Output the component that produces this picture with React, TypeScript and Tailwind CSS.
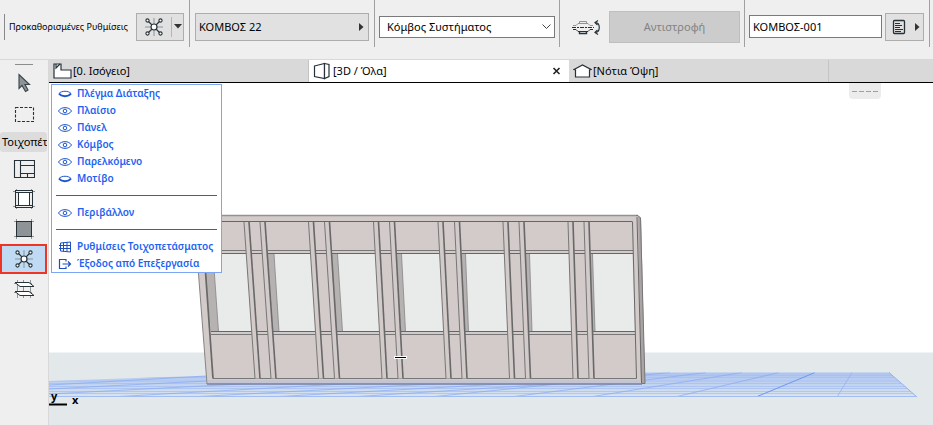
import { ReactNode, useState } from "react";
import clsx from "clsx";

type IconProps = { className?: string };

const NodeIcon = ({ className }: IconProps) => (
    <svg className={className} width="20" height="20" viewBox="0 0 20 20" fill="none" stroke="#263238">
        <path d="M10 1v18M1 10h18" stroke="#8d9396" />
        <path d="M4.500 4.500l11 11M15.500 4.500l-11 11" strokeWidth="1.200" />
        <circle cx="10" cy="10" r="3" fill="white" strokeWidth="1.200" />
        <circle cx="3.500" cy="3.500" r="1.600" fill="white" strokeWidth="1.100" />
        <circle cx="16.500" cy="3.500" r="1.600" fill="white" strokeWidth="1.100" />
        <circle cx="3.500" cy="16.500" r="1.600" fill="white" strokeWidth="1.100" />
        <circle cx="16.500" cy="16.500" r="1.600" fill="white" strokeWidth="1.100" />
    </svg>
)

const FlipIcon = () => (
    <svg width="29" height="16" viewBox="0 0 29 16" fill="none" stroke="#263238">
        <path d="M0 8.500h22" strokeDasharray="4 1 2 1" />
        <path d="M1 6.500h3l2-2h10l2 2h3M7.500 4.500v-2h7v2" stroke="#8d9396" />
        <path d="M1 10.500h3l2 2h10l2-2h3" />
        <path d="M7.500 12.500v2h7v-2" strokeWidth="1.400" />
        <path d="M23.500 3.500c5 .5 5 9.500 0 10" strokeWidth="1.200" />
        <path d="M26 1.500l-3 2 2.500 2.500M26 15.500l-3-2 2.500-2.500" strokeWidth="1.200" />
    </svg>
)

const PageIcon = () => (
    <svg width="14" height="16" viewBox="0 0 14 16" fill="none" stroke="#263238">
        <rect x="1.500" y="1.500" width="11" height="13" rx="1" strokeWidth="1.300" />
        <path d="M3 4.500h5M3 6.500h7M3 8.500h5M3 10.500h8M3 12.500h6" />
    </svg>
)

const ArrowRight = () => (
    <svg width="5" height="8" viewBox="0 0 5 8"><path d="M0 0v8l4.500-4z" fill="#333" /></svg>
)

const PlanIcon = () => (
    <svg width="19" height="16" viewBox="0 0 19 16" fill="white" stroke="#263238" strokeWidth="1.200">
        <path d="M1 1h7v6h10v8H1z" />
        <path d="M3 1v4l4-4" fill="none" />
    </svg>
)

const BoxIcon = () => (
    <svg width="19" height="18" viewBox="0 0 19 18" fill="white" stroke="#263238" strokeWidth="1.200">
        <path d="M1.500 4l10-2.500v15l-10-2z" />
        <path d="M11.500 1.500l4.500 1v12l-4.500 2z" />
    </svg>
)

const HouseIcon = () => (
    <svg width="19" height="14" viewBox="0 0 19 14" fill="white" stroke="#263238" strokeWidth="1.200">
        <path d="M1 5.500L9.500 1 18 5.500l-1.500.5v7h-14V6z" />
    </svg>
)

const ArrowTool = () => (
    <svg width="22" height="22" viewBox="0 0 22 22" fill="#8d9396" stroke="#37444a" strokeWidth="1.100">
        <path d="M6 2.500v14l3-3 3.500 6 2.500-1.500-3-5.500h4.500z" />
    </svg>
)

const MarqueeTool = () => (
    <svg width="22" height="22" viewBox="0 0 22 22" fill="none" stroke="#263238" strokeWidth="1.100">
        <rect x="2.500" y="4.500" width="18" height="14" strokeDasharray="3 1.500" />
    </svg>
)

const SchemeTool = () => (
    <svg width="22" height="20" viewBox="0 0 22 20" fill="none" stroke="#263238" strokeWidth="1.100">
        <path d="M1.500 1.500h20v17h-20zM7.500 1.500v17M7.500 6.500h14M7.500 14.500h14M14.500 14.500v4" />
    </svg>
)

const FrameTool = () => (
    <svg width="22" height="20" viewBox="0 0 22 20" fill="none" stroke="#263238">
        <path d="M0 2.500h22M0 17.500h22M3.500 0v20M18.500 0v20" stroke="#8d9396" />
        <rect x="2.500" y="1.500" width="17" height="17" fill="#efefef" />
        <rect x="5.500" y="3.500" width="11" height="13" fill="white" />
        <path d="M2.500 3.500h17M2.500 16.500h17" />
    </svg>
)

const PanelTool = () => (
    <svg width="22" height="20" viewBox="0 0 22 20" fill="none" stroke="#263238">
        <path d="M1 2.500h20M1 17.500h20M3.500 0v20M18.500 0v20" stroke="#8d9396" />
        <rect x="3.500" y="2.500" width="15" height="15" fill="#8d9396" />
    </svg>
)

const AccessoryTool = () => (
    <svg width="22" height="20" viewBox="0 0 22 20" fill="none" stroke="#263238">
        <path d="M4.500 1v18M10.500 1v18M17.500 1v18M1 4.500h18M1 13.500h18" stroke="#8d9396" />
        <path d="M2 3.500h14l5 4H7zM2 12.500h14l5 4H7z" fill="white" />
    </svg>
)

const EyeOpen = () => (
    <svg width="14" height="10" viewBox="0 0 14 10" fill="none" stroke="#1d55cf">
        <path d="M.5 5C3 .5 11 .5 13.500 5 11 9.500 3 9.500.5 5z" />
        <circle cx="7" cy="5" r="1.800" />
    </svg>
)

const EyeClosed = () => (
    <svg width="14" height="10" viewBox="0 0 14 10" fill="none" stroke="#1d55cf">
        <path d="M1 4.500C3.500 1.500 10.500 1.500 13 4.500" />
        <path d="M1 4.500C3.500 8 10.500 8 13 4.500" strokeWidth="2" />
    </svg>
)

const WallIcon = () => (
    <svg width="14" height="12" viewBox="0 0 14 12" fill="none" stroke="#1d4fc0">
        <path d="M2.500 2l10-1v10l-10-1M5.500 1.700v8.700M9 1.300v9.400M2.500 2v8M1 4.500h11.500M1 7.500h11.500" />
    </svg>
)

const ExitIcon = () => (
    <svg width="14" height="12" viewBox="0 0 14 12" fill="none" stroke="#1d4fc0" strokeWidth="1.200">
        <path d="M8 3.500V1.500H1.500v9H8v-2M4.500 6h8M10 3.500L12.500 6 10 8.500" />
    </svg>
)

// x of both mullions at the head and at the sill, then the far edge of the reveal
const mullions = [
    { head: [244, 260], foot: [255, 271], reveal: [274, 279] },
    { head: [308.5, 324.5], foot: [318.5, 334.5], reveal: [337.5, 342.5] },
    { head: [373.5, 389.5], foot: [382, 398], reveal: [401.5, 405.5] },
    { head: [438, 454.5], foot: [446, 462], reveal: [465.5, 468.5] },
    { head: [503, 519], foot: [509.5, 525.5], reveal: [529.5, 532] },
    { head: [568, 584], foot: [573, 589], reveal: [592.5, 595] },
];

const gridRows = [375.5, 377.5, 381, 383.5, 386.5, 388.5, 391.5, 393.5];

const gridLines = [
    "M49 385L206 376", "M49 389L206 381", "M49 394L260 383", "M110 397L360 383", "M190 397L450 383",
    "M270 397L520 383", "M350 397L600 381", "M430 397L670 372.5", "M510 397L706 372.5",
    "M590 397L742 372.5", "M675 397L779 372.5",
];

const Scene = () => (
    <svg className="absolute inset-0 h-full w-full" viewBox="49 83 884 342" preserveAspectRatio="xMinYMin slice" fill="none">
        <defs>
            <linearGradient id="grid" x1="0" y1="372" x2="0" y2="397" gradientUnits="userSpaceOnUse">
                <stop offset="0" stopColor="#acc3f1" />
                <stop offset="1" stopColor="#dbe5ee" />
            </linearGradient>
            <clipPath id="floor"><path d="M49 381L300 372.500H889L917 397H49z" /></clipPath>
        </defs>
        <rect x="49" y="352.500" width="884" height="73" fill="#e3e9eb" />
        <g clipPath="url(#floor)">
            <rect x="49" y="372" width="870" height="25" fill="url(#grid)" />
            {gridRows.map((y) => <path key={y} d={`M49 ${y}H917`} stroke="#a3bdf3" strokeWidth=".7" />)}
            {gridLines.map((d) => <path key={d} d={d} stroke="#86a9f3" strokeWidth=".7" />)}
            <path d="M756 397L815 372.500" stroke="#6d97f2" />
            <path d="M837 397L852 372.500" stroke="#94b1ef" strokeWidth=".8" />
        </g>
        <path d="M889 372.500L917 397" stroke="#8fb0f3" />
        <path d="M49 396.500H917" stroke="#a1bdf3" />

        <path d="M194 215.500H638l3 2.500 4 165.500-3 .5H207z" fill="#d3caca" />
        <path d="M638 215.500l3 2.500 4 165.500h-4z" fill="#aaa4a4" />
        <path d="M206 254H632.500L635 331.500H211z" fill="#e8ebea" />
        <path d="M203 254h10l5.500 77.500H211z" fill="#b6b2b2" />
        <path d="M213 254l5.500 77.500" stroke="#858585" strokeWidth=".8" />
        {mullions.map(({ head, foot, reveal }) => (
            <g key={head[0]}>
                <path d={`M${head[0] + 5} 254L${foot[0] + 2} 331.500H${reveal[1]}L${reveal[0]} 254z`} fill="#b6b2b2" />
                <path d={`M${reveal[0]} 254L${reveal[1]} 331.500`} stroke="#858585" strokeWidth=".8" />
                <path d={`M${head[0]} 222H${head[1]}L${foot[1]} 378.500H${foot[0]}z`} fill="#d3caca" />
            </g>
        ))}
        <g stroke="#777">
            <path d="M194 215.500H638" stroke="#929292" strokeWidth="1.500" />
            <path d="M201 221.500H632.500" stroke="#656565" />
            <path d="M204 250.500H633M211 334.500H635" />
            <path d="M204 253.500H633M211 331.500H635" stroke="#666" />
            <path d="M213 378.500H636.500" />
        </g>
        {mullions.map(({ head, foot }) => head.map((x, i) => (
            <g key={x}>
                <path d={`M${x} 222H${x + 5.5}L${foot[i] + 5} 378.500H${foot[i]}z`} fill="#d3caca" />
                <path d={`M${x} 222L${foot[i]} 378.500`} stroke="#777" />
                <path d={`M${x + 5} 222L${foot[i] + 5} 378.500`} stroke="#686868" strokeWidth="1.600" />
            </g>
        )))}
        <path d="M194 215.500L207 384" stroke="#858585" />
        <path d="M202 222L213 378.500" stroke="#686868" strokeWidth="1.700" />
        <path d="M632.500 222L636.500 378.500M637 217L641.500 383.500" stroke="#686868" />
        <path d="M636 215.500h2l2.500 2.500L645 383.500h-4" stroke="#777" />
        <rect x="208" y="380" width="432" height="3.500" fill="#9db4e8" opacity=".25" />
        <path d="M207 384H642" stroke="#7580a3" strokeWidth="1.300" />

        <path d="M394 357.500h13" stroke="white" strokeWidth="3" />
        <path d="M395 357.500h11" stroke="black" />
        <path d="M49 404.500h18" stroke="black" strokeWidth="2" />
        <text x="51" y="400" fill="black" className="font-bold text-[11px]">y</text>
        <text x="72" y="404" fill="black" className="font-bold text-[11px]">x</text>
    </svg>
)

const tools = [
    { name: "Βέλος", icon: <ArrowTool />, height: "h-[34px]" },
    { name: "Πλαίσιο επιλογής", icon: <MarqueeTool />, height: "h-7" },
];

const wallTools = [
    { name: "Σχήμα", icon: <SchemeTool /> },
    { name: "Πλαίσιο", icon: <FrameTool /> },
    { name: "Πάνελ", icon: <PanelTool /> },
    { name: "Κόμβος", icon: <NodeIcon /> },
    { name: "Παρελκόμενο", icon: <AccessoryTool /> },
];

const layers = [
    { name: "Πλέγμα Διάταξης", visible: false },
    { name: "Πλαίσιο", visible: true },
    { name: "Πάνελ", visible: true },
    { name: "Κόμβος", visible: true },
    { name: "Παρελκόμενο", visible: true },
    { name: "Μοτίβο", visible: false },
];

const PanelRow = ({ icon, children }: { icon: ReactNode; children: ReactNode }) => (
    <button className="flex h-[17px] w-full items-center gap-[5px] whitespace-nowrap pl-1.5 text-left">
        <span className="flex w-3.5 justify-center">{icon}</span>
        {children}
    </button>
)

const Separator = () => <div className="flex h-[17px] items-center px-1"><hr className="w-full border-[#1d5ff0]" /></div>

const ViewPanel = () => (
    <div className="absolute left-0.5 top-px w-[171px] border border-[#7ba5f7] bg-white text-[10px] leading-[17px] font-semibold text-[#1d63f2]">
        {layers.map(({ name, visible }) => (
            <PanelRow key={name} icon={visible ? <EyeOpen /> : <EyeClosed />}>{name}</PanelRow>
        ))}
        <Separator />
        <PanelRow icon={<EyeOpen />}>Περιβάλλον</PanelRow>
        <Separator />
        <PanelRow icon={<WallIcon />}>Ρυθμίσεις Τοιχοπετάσματος</PanelRow>
        <PanelRow icon={<ExitIcon />}>Έξοδος από Επεξεργασία</PanelRow>
    </div>
)

const Toolbar = () => (
    <header className="flex h-[60px] items-start border-b border-[#d8d8d8] bg-[#efefef] pr-[3px]">
        <div className="flex h-[47px] w-[190px] shrink-0 items-center border-r border-[#a0a0a0] pl-1 pr-[5px] pt-1.5">
            <span className="flex h-[26px] flex-1 items-center border-l border-[#888] pl-1 text-[9px] whitespace-nowrap">Προκαθορισμένες Ρυθμίσεις</span>
            <button aria-label="Προκαθορισμένες Ρυθμίσεις" className="flex h-7 w-12 items-center border border-[#adadad] bg-[#e1e1e1]">
                <span className="flex flex-1 justify-center"><NodeIcon /></span>
                <span className="flex h-5 w-3 items-center justify-center border-l border-[#b5b5b5]">
                    <svg width="8" height="5" viewBox="0 0 8 5"><path d="M0 0h8L4 4.500z" fill="#333" /></svg>
                </span>
            </button>
        </div>
        <div className="grid flex-1 grid-cols-4">
            <div className="flex h-[47px] items-center border-r border-[#a0a0a0] px-[5px] pt-1.5">
                <button className="flex h-7 w-full items-center justify-between border border-[#adadad] bg-[#e1e1e1] pl-[3px] pr-1">
                    ΚΟΜΒΟΣ 22
                    <ArrowRight />
                </button>
            </div>
            <div className="flex h-[47px] items-center border-r border-[#a0a0a0] px-1 pt-1.5">
                <div className="relative w-full">
                    <select aria-label="Τύπος κόμβου" className="block h-[22px] w-full appearance-none border border-[#7a7a7a] bg-white pl-[7px]">
                        <option>Κόμβος Συστήματος</option>
                    </select>
                    <svg className="pointer-events-none absolute right-1 top-2" width="9" height="6" viewBox="0 0 9 6" fill="none" stroke="#444"><path d="M.5.500l4 4 4-4" /></svg>
                </div>
            </div>
            <div className="flex h-[47px] items-center justify-between border-r border-[#a0a0a0] pl-3 pr-1 pt-1.5">
                <FlipIcon />
                <button disabled className="h-8 w-[131px] border border-[#bfbfbf] bg-[#cccccc] text-[#838383]">Αντιστροφή</button>
            </div>
            <div className="flex h-[47px] items-center gap-[3px] border-r border-[#a0a0a0] pl-1 pr-[5px] pt-1.5">
                <input aria-label="Αναγνωριστικό" defaultValue="ΚΟΜΒΟΣ-001" className="h-[23px] w-0 flex-1 border border-[#7a7a7a] bg-white pl-[3px]" />
                <button aria-label="Στοιχεία" className="flex h-7 w-[39px] items-center justify-between border border-[#adadad] bg-[#e1e1e1] pl-1.5 pr-[3px]">
                    <PageIcon />
                    <ArrowRight />
                </button>
            </div>
        </div>
    </header>
)

const tabs = [
    { name: "[0. Ισόγειο]", icon: <PlanIcon /> },
    { name: "[3D / Όλα]", icon: <BoxIcon /> },
    { name: "[Νότια Όψη]", icon: <HouseIcon /> },
];

export default function App() {
    const [activeTab, setActiveTab] = useState(1);
    const [activeTool, setActiveTool] = useState(3);

    return (
        <div className="flex min-h-screen flex-col bg-[#efefef] font-['Noto_Sans','Open_Sans',sans-serif] text-[11px] leading-4 text-black">
            <Toolbar />
            <div className="flex flex-1">
                <aside className="flex w-[49px] shrink-0 flex-col items-center border-r border-[#d8d8d8] pr-px pt-1">
                    <div className="mb-px h-px w-[18px] bg-[#8d8d8d]" />
                    {tools.map(({ name, icon, height }) => (
                        <button key={name} aria-label={name} className={clsx("flex w-full items-center justify-center", height)}>{icon}</button>
                    ))}
                    <div className="mt-1 mb-0.5 h-5 w-full overflow-hidden rounded-[3px] bg-[#dcdcdc] pl-0.5 leading-5 whitespace-nowrap">Τοιχοπέτ</div>
                    {wallTools.map(({ name, icon }, i) => (
                        <button
                            key={name}
                            aria-label={name}
                            onClick={() => setActiveTool(i)}
                            className={clsx("flex h-[30px] w-full items-center justify-center", i === activeTool && "border-2 border-[#ee3524] bg-[#bfdaf2]")}
                        >
                            {icon}
                        </button>
                    ))}
                </aside>
                <main className="flex min-w-0 flex-1 flex-col">
                    <nav className="flex h-[23px] border-b border-black bg-[#d9d9d9]">
                        {tabs.map(({ name, icon }, i) => (
                            <div key={name} className={clsx("flex w-[260px] items-center pl-1 pr-2", i === activeTab ? "bg-white" : "border-r border-[#c4c4c4]")}>
                                <button onClick={() => setActiveTab(i)} className="flex flex-1 items-center gap-px">
                                    {icon}
                                    {name}
                                </button>
                                {i === activeTab && (
                                    <button aria-label="Κλείσιμο">
                                        <svg width="9" height="8" viewBox="0 0 9 8" stroke="#222" strokeWidth="1.600"><path d="M1.500 1l6 6M7.500 1l-6 6" /></svg>
                                    </button>
                                )}
                            </div>
                        ))}
                    </nav>
                    <section className="relative min-h-[342px] flex-1 overflow-hidden bg-white">
                        <Scene />
                        <ViewPanel />
                        <div className="absolute right-[52px] top-0 flex h-4 w-8 items-center justify-center gap-0.5 rounded-b bg-[#ececec]">
                            <span className="h-px w-[5px] bg-[#f58a2c]" />
                            <span className="h-px w-[5px] bg-[#f58a2c]" />
                            <span className="h-px w-[5px] bg-[#f58a2c]" />
                            <span className="h-px w-[5px] bg-[#f58a2c]" />
                        </div>
                    </section>
                </main>
            </div>
        </div>
    )
}
